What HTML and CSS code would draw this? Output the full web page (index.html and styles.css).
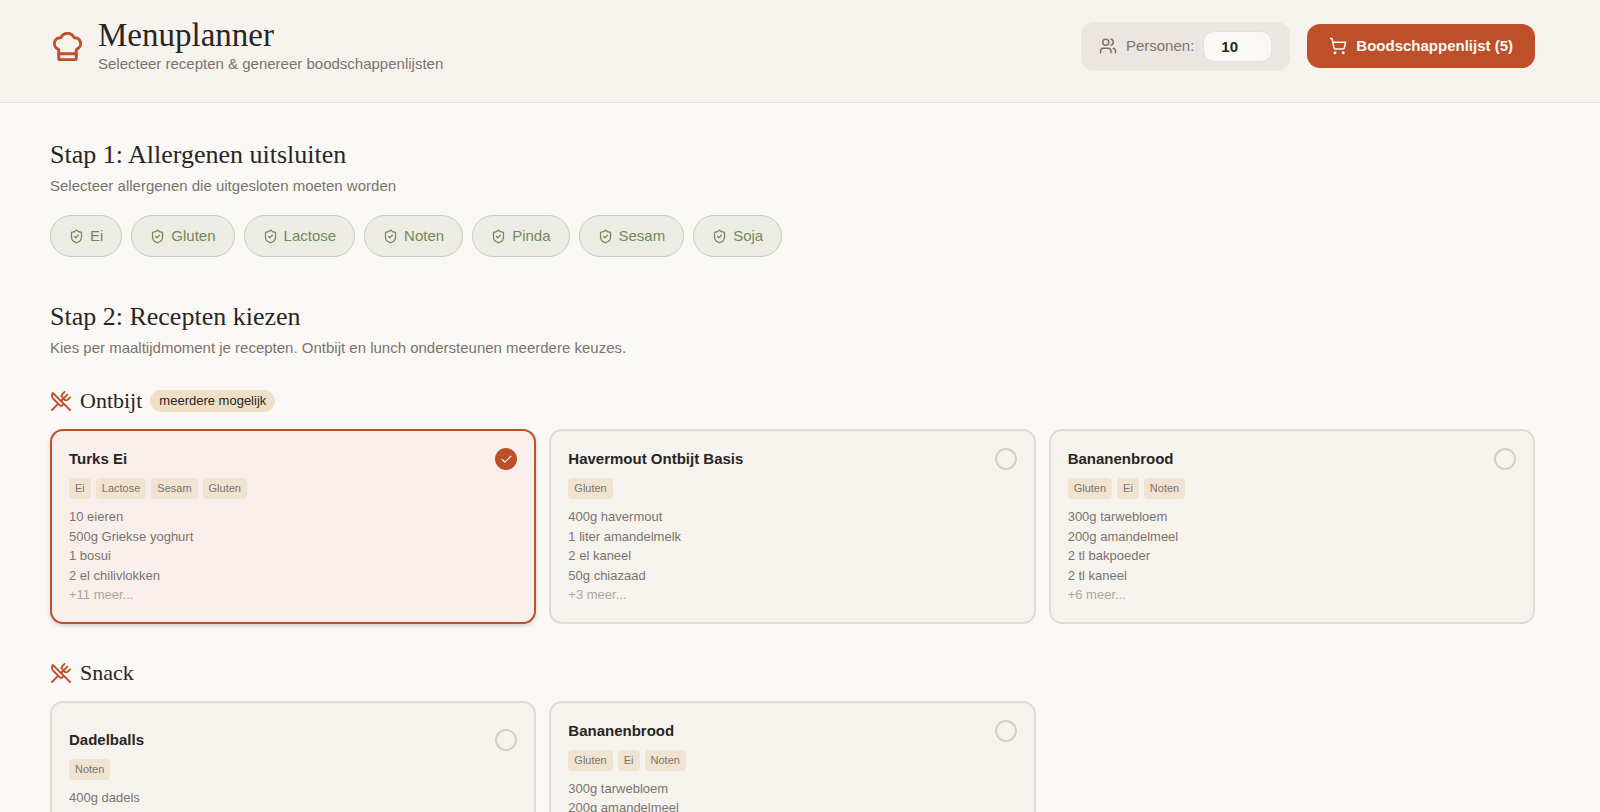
FILE: index.html
```html
<!DOCTYPE html>
<html lang="nl">
<head>
<meta charset="utf-8">
<meta name="viewport" content="width=device-width, initial-scale=1">
<title>Menuplanner</title>
<link rel="stylesheet" href="styles.css">
</head>
<body>
<svg class="sprite" aria-hidden="true">
  <symbol id="shield" viewBox="0 0 24 24"><path d="M20 13c0 5-3.5 7.5-7.66 8.95a1 1 0 0 1-.67-.01C7.5 20.500 4 18 4 13V6a1 1 0 0 1 1-1c2 0 4.500-1.200 6.240-2.720a1.170 1.170 0 0 1 1.520 0C14.510 3.810 17 5 19 5a1 1 0 0 1 1 1z"/><path d="m9 12 2 2 4-4"/></symbol>
  <symbol id="utensils" viewBox="0 0 24 24"><path d="m16 2-2.300 2.300a3 3 0 0 0 0 4.200l1.800 1.800a3 3 0 0 0 4.200 0L22 8"/><path d="M15 15 3.300 3.300a4.200 4.200 0 0 0 0 6l7.300 7.300c.7.7 2 .7 2.800 0L15 15Zm0 0 7 7"/><path d="m2.100 21.800 6.400-6.300"/><path d="m19 5-7 7"/></symbol>
</svg>

<header class="header">
  <div class="brand">
    <svg class="icon brand-icon" viewBox="0 0 24 24" aria-hidden="true"><path d="M17 21a1 1 0 0 0 1-1v-5.350c0-.457.316-.844.727-1.041a4 4 0 0 0-2.134-7.589 5 5 0 0 0-9.186 0 4 4 0 0 0-2.134 7.588c.411.198.727.585.727 1.041V20a1 1 0 0 0 1 1Z"/><path d="M6 17h12"/></svg>
    <div>
      <h1 class="brand-title">Menuplanner</h1>
      <p class="brand-text">Selecteer recepten &amp; genereer boodschappenlijsten</p>
    </div>
  </div>
  <div class="actions">
    <div class="persons">
      <svg class="icon action-icon" viewBox="0 0 24 24" aria-hidden="true"><path d="M16 21v-2a4 4 0 0 0-4-4H6a4 4 0 0 0-4 4v2"/><circle cx="9" cy="7" r="4"/><path d="M22 21v-2a4 4 0 0 0-3-3.870"/><path d="M16 3.130a4 4 0 0 1 0 7.750"/></svg>
      <label for="persons">Personen:</label>
      <input class="persons-input" id="persons" type="number" min="1" value="10">
    </div>
    <button class="list-button" type="button">
      <svg class="icon action-icon" viewBox="0 0 24 24" aria-hidden="true"><circle cx="8" cy="21" r="1"/><circle cx="19" cy="21" r="1"/><path d="M2.050 2.050h2l2.660 12.420a2 2 0 0 0 2 1.580h9.780a2 2 0 0 0 1.950-1.570l1.650-7.430H5.120"/></svg>
      Boodschappenlijst (5)
    </button>
  </div>
</header>

<main class="main">
  <section class="step">
    <h2 class="step-title">Stap 1: Allergenen uitsluiten</h2>
    <p class="step-text">Selecteer allergenen die uitgesloten moeten worden</p>
    <div class="chips">
      <button class="chip" type="button"><svg class="icon chip-icon" aria-hidden="true"><use href="#shield"/></svg>Ei</button>
      <button class="chip" type="button"><svg class="icon chip-icon" aria-hidden="true"><use href="#shield"/></svg>Gluten</button>
      <button class="chip" type="button"><svg class="icon chip-icon" aria-hidden="true"><use href="#shield"/></svg>Lactose</button>
      <button class="chip" type="button"><svg class="icon chip-icon" aria-hidden="true"><use href="#shield"/></svg>Noten</button>
      <button class="chip" type="button"><svg class="icon chip-icon" aria-hidden="true"><use href="#shield"/></svg>Pinda</button>
      <button class="chip" type="button"><svg class="icon chip-icon" aria-hidden="true"><use href="#shield"/></svg>Sesam</button>
      <button class="chip" type="button"><svg class="icon chip-icon" aria-hidden="true"><use href="#shield"/></svg>Soja</button>
    </div>
  </section>

  <section class="step">
    <h2 class="step-title">Stap 2: Recepten kiezen</h2>
    <p class="step-text">Kies per maaltijdmoment je recepten. Ontbijt en lunch ondersteunen meerdere keuzes.</p>

    <div class="meal">
      <div class="meal-head">
        <svg class="icon meal-icon" aria-hidden="true"><use href="#utensils"/></svg>
        <h3 class="meal-title">Ontbijt</h3>
        <span class="badge">meerdere mogelijk</span>
      </div>
      <div class="cards">
        <button class="card card-selected" type="button" aria-pressed="true">
          <span class="card-head"><span class="card-title">Turks Ei</span><span class="mark mark-on"><svg class="icon mark-icon" viewBox="0 0 24 24" aria-hidden="true"><path d="M20 6 9 17l-5-5"/></svg></span></span>
          <span class="tags"><span class="tag">Ei</span><span class="tag">Lactose</span><span class="tag">Sesam</span><span class="tag">Gluten</span></span>
          <span class="lines"><span>10 eieren</span><span>500g Griekse yoghurt</span><span>1 bosui</span><span>2 el chilivlokken</span><span class="more">+11 meer...</span></span>
        </button>
        <button class="card" type="button" aria-pressed="false">
          <span class="card-head"><span class="card-title">Havermout Ontbijt Basis</span><span class="mark"></span></span>
          <span class="tags"><span class="tag">Gluten</span></span>
          <span class="lines"><span>400g havermout</span><span>1 liter amandelmelk</span><span>2 el kaneel</span><span>50g chiazaad</span><span class="more">+3 meer...</span></span>
        </button>
        <button class="card" type="button" aria-pressed="false">
          <span class="card-head"><span class="card-title">Bananenbrood</span><span class="mark"></span></span>
          <span class="tags"><span class="tag">Gluten</span><span class="tag">Ei</span><span class="tag">Noten</span></span>
          <span class="lines"><span>300g tarwebloem</span><span>200g amandelmeel</span><span>2 tl bakpoeder</span><span>2 tl kaneel</span><span class="more">+6 meer...</span></span>
        </button>
      </div>
    </div>

    <div class="meal">
      <div class="meal-head">
        <svg class="icon meal-icon" aria-hidden="true"><use href="#utensils"/></svg>
        <h3 class="meal-title">Snack</h3>
      </div>
      <div class="cards">
        <button class="card" type="button" aria-pressed="false">
          <span class="card-head"><span class="card-title">Dadelballs</span><span class="mark"></span></span>
          <span class="tags"><span class="tag">Noten</span></span>
          <span class="lines"><span>400g dadels</span><span>200g noten</span><span>2 el cacao</span><span>50g kokos</span></span>
        </button>
        <button class="card" type="button" aria-pressed="false">
          <span class="card-head"><span class="card-title">Bananenbrood</span><span class="mark"></span></span>
          <span class="tags"><span class="tag">Gluten</span><span class="tag">Ei</span><span class="tag">Noten</span></span>
          <span class="lines"><span>300g tarwebloem</span><span>200g amandelmeel</span><span>2 tl bakpoeder</span><span>2 tl kaneel</span><span class="more">+6 meer...</span></span>
        </button>
      </div>
    </div>
  </section>
</main>
</body>
</html>
```

FILE: styles.css
```css
:root {
  --ink: #292524;
  --muted: #7c736e;
  --accent: #bd4f29;
  --page: #faf8f5;
  --panel: #f6f3ee;
  --line: #e0dbd6;
  --sand: #efdfc6;
  --green: #74895a;
  --serif: "Liberation Serif", "Times New Roman", serif;
  --sans: "Liberation Sans", Arial, sans-serif;
}

* {
  box-sizing: border-box;
}

body {
  margin: 0;
  background: var(--page);
  color: var(--ink);
  font: 15px/22px var(--sans);
}

h1, h2, h3, p {
  margin: 0;
}

h1, h2, h3 {
  font-family: var(--serif);
  font-weight: 400;
}

button, input {
  font: inherit;
  color: inherit;
}

button {
  cursor: pointer;
}

.sprite {
  position: absolute;
  width: 0;
  height: 0;
}

.icon {
  flex: none;
  fill: none;
  stroke: currentColor;
  stroke-width: 2;
  stroke-linecap: round;
  stroke-linejoin: round;
}

.header {
  display: flex;
  align-items: center;
  justify-content: space-between;
  padding: 17px 65px 27px 50px;
  background: var(--panel);
  border-bottom: 1px solid #e9e2da;
}

.brand {
  display: flex;
  align-items: center;
  gap: 13px;
}

.brand-icon {
  width: 35px;
  height: 35px;
  color: var(--accent);
}

.brand-title {
  font-size: 33px;
  line-height: 36px;
}

.brand-text,
.step-text {
  color: var(--muted);
}

.actions {
  display: flex;
  align-items: center;
  gap: 17px;
}

.action-icon {
  width: 18px;
  height: 18px;
}

.persons {
  display: flex;
  align-items: center;
  gap: 9px;
  padding: 9px 18px;
  border-radius: 13px;
  background: #ebe6e1;
  color: var(--muted);
}

.persons-input {
  width: 69px;
  height: 31px;
  padding: 0 17px;
  border: 1px solid #e6e0da;
  border-radius: 11px;
  background: var(--page);
  color: var(--ink);
  font-weight: 700;
  appearance: textfield;
}

.persons-input::-webkit-inner-spin-button {
  appearance: none;
}

.list-button {
  display: flex;
  align-items: center;
  gap: 9px;
  padding: 11px 22px;
  border: 0;
  border-radius: 13px;
  background: var(--accent);
  color: var(--page);
  font-weight: 700;
}

.main {
  padding: 34px 65px 36px 50px;
}

.step {
  margin-bottom: 42px;
}

.step-title {
  font-size: 26px;
  line-height: 36px;
}

.step-text {
  margin-top: 2px;
}

.chips {
  display: flex;
  flex-wrap: wrap;
  gap: 9px;
  margin-top: 18px;
}

.chip {
  display: flex;
  align-items: center;
  gap: 6px;
  padding: 9px 18px;
  border: 1px solid #c9cbc0;
  border-radius: 21px;
  background: #ecece4;
  color: var(--green);
}

.chip-icon {
  width: 15px;
  height: 15px;
}

.meal {
  margin-top: 27px;
}

.meal + .meal {
  margin-top: 34px;
}

.meal-head {
  display: flex;
  align-items: center;
  gap: 8px;
}

.meal-icon {
  width: 22px;
  height: 22px;
  color: var(--accent);
}

.meal-title {
  font-size: 22px;
  line-height: 30px;
}

.badge {
  padding: 2px 9px;
  border-radius: 11px;
  background: var(--sand);
  font-size: 13px;
  line-height: 18px;
}

.cards {
  display: grid;
  grid-template-columns: repeat(3, 1fr);
  gap: 13px;
  margin-top: 13px;
}

.card {
  display: flex;
  flex-direction: column;
  justify-content: center;
  gap: 8px;
  padding: 17px;
  border: 2px solid var(--line);
  border-radius: 13px;
  background: var(--panel);
  text-align: left;
}

.card-selected {
  border-color: var(--accent);
  background: #f8efec;
  box-shadow: 0 2px 4px rgb(0 0 0 / 14%);
}

.card-head {
  display: flex;
  align-items: center;
  justify-content: space-between;
}

.card-title {
  font-weight: 700;
}

.mark {
  display: grid;
  place-items: center;
  width: 22px;
  height: 22px;
  border: 2px solid #d3d0ca;
  border-radius: 50%;
}

.mark-on {
  border-color: var(--accent);
  background: var(--accent);
  color: var(--page);
}

.mark-icon {
  width: 13px;
  height: 13px;
}

.tags {
  display: flex;
  gap: 5px;
}

.tag {
  padding: 2px 6px;
  border-radius: 4px;
  background: #f0e3d1;
  color: var(--muted);
  font-size: 11px;
  line-height: 17px;
}

.lines {
  display: flex;
  flex-direction: column;
  color: var(--muted);
  font-size: 13px;
  line-height: 1.5;
}

.more {
  opacity: 0.6;
}
```
